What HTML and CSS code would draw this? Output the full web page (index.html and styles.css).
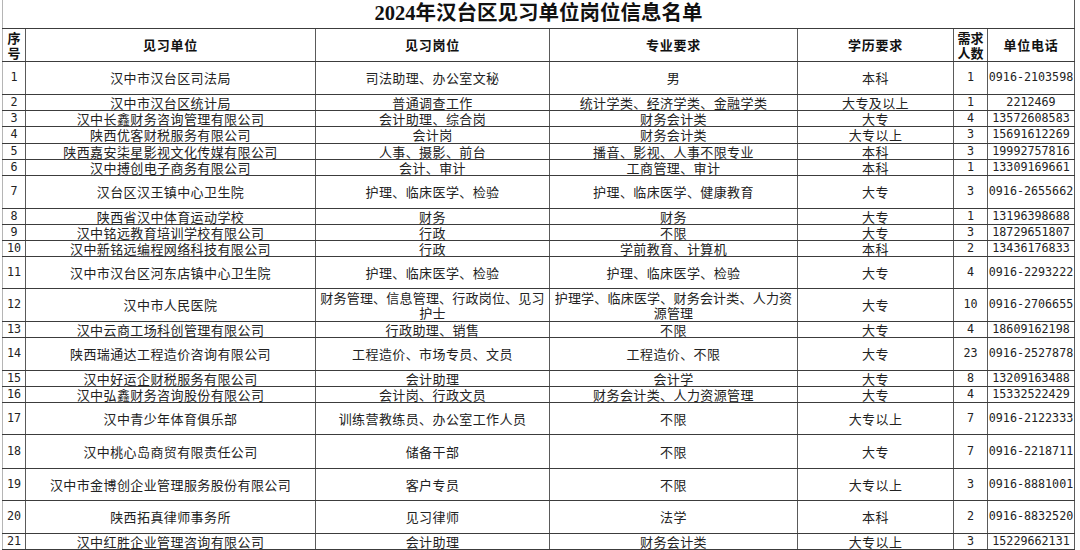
FILE: index.html
```html
<!DOCTYPE html>
<html lang="zh-CN">
<head>
<meta charset="utf-8">
<title>2024年汉台区见习单位岗位信息名单</title>
<link rel="stylesheet" href="styles.css">
</head>
<body>
<table class="sheet">
  <colgroup>
    <col class="c-no"><col class="c-unit"><col class="c-post"><col class="c-major"><col class="c-edu"><col class="c-num"><col class="c-tel">
  </colgroup>
  <tr class="title-row"><td colspan="7" class="title">2024年汉台区见习单位岗位信息名单</td></tr>
  <tr class="head h33">
    <th>序<br>号</th><th>见习单位</th><th>见习岗位</th><th>专业要求</th><th>学历要求</th><th>需求<br>人数</th><th>单位电话</th>
  </tr>
  <tr class="h33"><td class="n">1</td><td>汉中市汉台区司法局</td><td>司法助理、办公室文秘</td><td>男</td><td>本科</td><td class="n">1</td><td class="n">0916-2103598</td></tr>
  <tr class="h15"><td class="n">2</td><td>汉中市汉台区统计局</td><td>普通调查工作</td><td>统计学类、经济学类、金融学类</td><td>大专及以上</td><td class="n">1</td><td class="n">2212469</td></tr>
  <tr class="h16"><td class="n">3</td><td>汉中长鑫财务咨询管理有限公司</td><td>会计助理、综合岗</td><td>财务会计类</td><td>大专</td><td class="n">4</td><td class="n">13572608583</td></tr>
  <tr class="h17"><td class="n">4</td><td>陕西优客财税服务有限公司</td><td>会计岗</td><td>财务会计类</td><td>大专以上</td><td class="n">3</td><td class="n">15691612269</td></tr>
  <tr class="h16"><td class="n">5</td><td>陕西嘉安柒星影视文化传媒有限公司</td><td>人事、摄影、前台</td><td>播音、影视、人事不限专业</td><td>本科</td><td class="n">3</td><td class="n">19992757816</td></tr>
  <tr class="h16"><td class="n">6</td><td>汉中搏创电子商务有限公司</td><td>会计、审计</td><td>工商管理、审计</td><td>本科</td><td class="n">1</td><td class="n">13309169661</td></tr>
  <tr class="h33"><td class="n">7</td><td>汉台区汉王镇中心卫生院</td><td>护理、临床医学、检验</td><td>护理、临床医学、健康教育</td><td>大专</td><td class="n">3</td><td class="n">0916-2655662</td></tr>
  <tr class="h16"><td class="n">8</td><td>陕西省汉中体育运动学校</td><td>财务</td><td>财务</td><td>大专</td><td class="n">1</td><td class="n">13196398688</td></tr>
  <tr class="h16"><td class="n">9</td><td>汉中铭远教育培训学校有限公司</td><td>行政</td><td>不限</td><td>大专</td><td class="n">3</td><td class="n">18729651807</td></tr>
  <tr class="h16"><td class="n">10</td><td>汉中新铭远编程网络科技有限公司</td><td>行政</td><td>学前教育、计算机</td><td>本科</td><td class="n">2</td><td class="n">13436176833</td></tr>
  <tr class="h32"><td class="n">11</td><td>汉中市汉台区河东店镇中心卫生院</td><td>护理、临床医学、检验</td><td>护理、临床医学、检验</td><td>大专</td><td class="n">4</td><td class="n">0916-2293222</td></tr>
  <tr class="h33"><td class="n">12</td><td>汉中市人民医院</td><td class="tight">财务管理、信息管理、行政岗位、见习<br>护士</td><td class="tight">护理学、临床医学、财务会计类、人力资<br>源管理</td><td>大专</td><td class="n">10</td><td class="n">0916-2706655</td></tr>
  <tr class="h16"><td class="n">13</td><td>汉中云商工场科创管理有限公司</td><td>行政助理、销售</td><td>不限</td><td>大专</td><td class="n">4</td><td class="n">18609162198</td></tr>
  <tr class="h33"><td class="n">14</td><td>陕西瑞通达工程造价咨询有限公司</td><td>工程造价、市场专员、文员</td><td>工程造价、不限</td><td>大专</td><td class="n">23</td><td class="n">0916-2527878</td></tr>
  <tr class="h16"><td class="n">15</td><td>汉中好运企财税服务有限公司</td><td>会计助理</td><td>会计学</td><td>大专</td><td class="n">8</td><td class="n">13209163488</td></tr>
  <tr class="h16"><td class="n">16</td><td>汉中弘鑫财务咨询股份有限公司</td><td>会计岗、行政文员</td><td>财务会计类、人力资源管理</td><td>大专</td><td class="n">4</td><td class="n">15332522429</td></tr>
  <tr class="h32"><td class="n">17</td><td>汉中青少年体育俱乐部</td><td>训练营教练员、办公室工作人员</td><td>不限</td><td>大专以上</td><td class="n">7</td><td class="n">0916-2122333</td></tr>
  <tr class="h34"><td class="n">18</td><td>汉中桃心岛商贸有限责任公司</td><td>储备干部</td><td>不限</td><td>大专</td><td class="n">7</td><td class="n">0916-2218711</td></tr>
  <tr class="h32"><td class="n">19</td><td>汉中市金博创企业管理服务股份有限公司</td><td>客户专员</td><td>不限</td><td>大专以上</td><td class="n">3</td><td class="n">0916-8881001</td></tr>
  <tr class="h33"><td class="n">20</td><td>陕西拓真律师事务所</td><td>见习律师</td><td>法学</td><td>本科</td><td class="n">2</td><td class="n">0916-8832520</td></tr>
  <tr class="h15"><td class="n">21</td><td>汉中红胜企业管理咨询有限公司</td><td>会计助理</td><td>财务会计类</td><td>大专以上</td><td class="n">3</td><td class="n">15229662131</td></tr>
  <tr class="h16"><td></td><td></td><td></td><td></td><td></td><td></td><td></td></tr>
</table>
</body>
</html>
```
FILE: styles.css
```css
html, body {
  margin: 0;
  padding: 0;
  background: #ffffff;
}

body {
  font-family: "Noto Sans CJK SC", "Noto Sans", sans-serif;
  color: #222;
  overflow: hidden;
}

.sheet {
  border-collapse: collapse;
  table-layout: fixed;
  width: 1072px;
  margin-left: 2px;
}

.c-no { width: 23px; }
.c-unit { width: 290px; }
.c-post { width: 234px; }
.c-major { width: 248px; }
.c-edu { width: 156px; }
.c-num { width: 34px; }
.c-tel { width: 87px; }

.sheet td,
.sheet th {
  border: 1px solid #3c3c3c;
  border-left-color: #5a5a5a;
  border-right-color: #5a5a5a;
  padding: 0;
  text-align: center;
  vertical-align: middle;
  font-size: 13px;
  line-height: 15px;
  letter-spacing: 0.4px;
  white-space: nowrap;
  overflow: visible;
}

.sheet tr > :first-child {
  border-left-color: #b5b5b5;
}

.title-row {
  height: 28px;
}

.sheet .title {
  border-top: none;
  font-family: "Liberation Serif", "Noto Sans CJK SC", serif;
  font-weight: 700;
  font-size: 20.5px;
  line-height: 24px;
  letter-spacing: 0;
  color: #111;
  padding-bottom: 2px;
}

.head th {
  font-weight: 700;
  font-size: 13px;
  letter-spacing: 0.8px;
  line-height: 15px;
  color: #111;
}

.head th:first-child,
.head th:nth-child(6) {
  letter-spacing: 0;
}

.sheet .n {
  font-family: "DejaVu Sans Mono", "Liberation Mono", monospace;
  font-size: 11.7px;
  letter-spacing: 0;
  color: #222;
}

.sheet .tight {
  letter-spacing: 0.2px;
  line-height: 15px;
}

.h15 { height: 15px; }
.h16 { height: 16px; }
.h17 { height: 17px; }
.h32 { height: 32px; }
.h33 { height: 33px; }
.h34 { height: 34px; }
```
